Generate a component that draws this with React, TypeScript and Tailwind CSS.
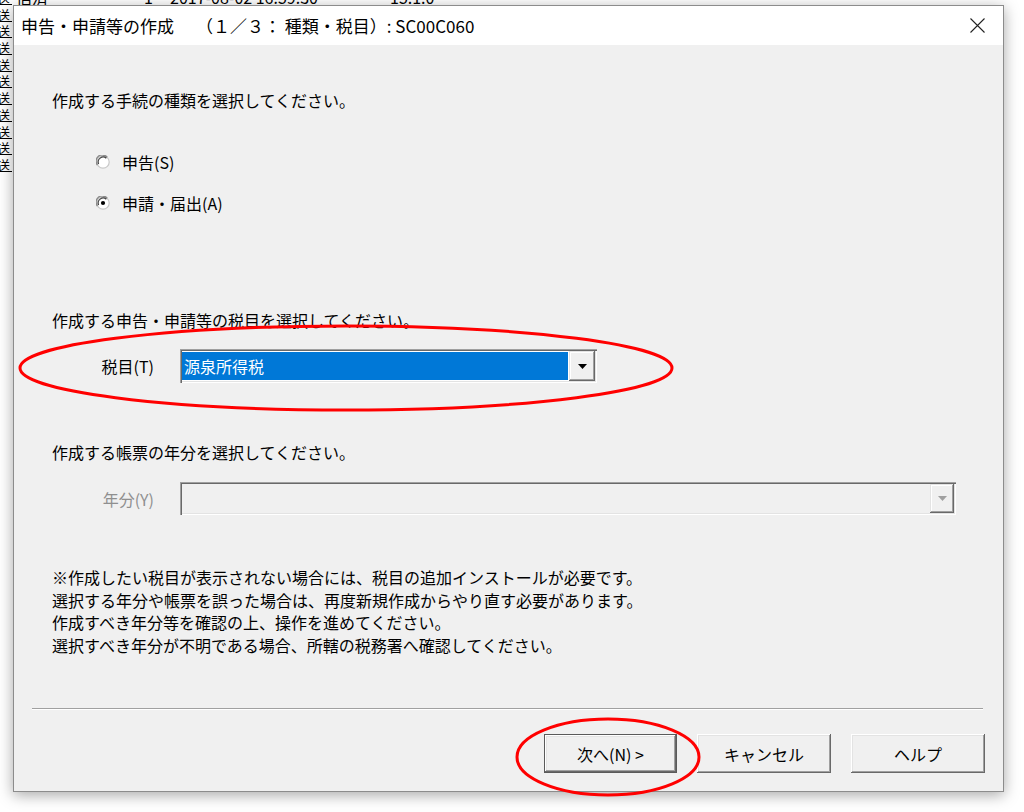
import React from "react";

const bgRows = Array.from({ length: 11 });

function Radio({ checked }: { checked?: boolean }) {
  return (
    <svg width="14" height="14" viewBox="0 0 14 14" className="shrink-0">
      <circle cx="7" cy="7" r="6.2" fill="#ffffff" stroke="#c8c8c8" strokeWidth="1.2" />
      <path d="M1.4 10 A6.2 6.2 0 0 1 11.2 2.3" fill="none" stroke="#8a8a8a" strokeWidth="1.4" />
      <path d="M2.6 9.1 A5 5 0 0 1 10.3 3.2" fill="none" stroke="#404040" strokeWidth="1.2" />
      {checked && <circle cx="7" cy="7" r="2.1" fill="#000" />}
    </svg>
  );
}

function Triangle({ color }: { color: string }) {
  return (
    <svg width="9" height="5" viewBox="0 0 9 5">
      <path d="M0 0 H9 L4.5 5 Z" fill={color} />
    </svg>
  );
}

export default function App() {
  return (
    <div className="relative w-[1024px] h-[812px] bg-white overflow-hidden font-['Noto_Sans_CJK_JP','Noto_Sans',sans-serif] text-black">
      {/* background window list */}
      <div className="flex flex-col mt-[-11.7px]">
        {bgRows.map((_, i) => (
          <div key={i} className="h-[16.7px] overflow-hidden flex items-end text-[13px] leading-[13px] text-black">
            <div className="w-[12px] overflow-hidden border-b border-black h-full flex items-end">
              <span className="ml-[-3px]">送</span>
            </div>
            {i === 0 && (
              <>
                <span className="ml-[4px] w-[128px] text-[16px] leading-[16px]">信済</span>
                <span className="w-[26px] text-[16px] leading-[16px]">1</span>
                <span className="w-[220px] text-[16px] leading-[16px]">2017-08-02 16:59:30</span>
                <span className="text-[16px] leading-[16px]">15.1.0</span>
              </>
            )}
          </div>
        ))}
      </div>

      {/* dialog window */}
      <div className="absolute left-[13px] top-[5px] w-[991px] h-[787px] border border-[#8c8c8c] bg-[#f0f0f0] shadow-[0_3px_14px_rgba(0,0,0,0.35)] flex flex-col">
        <div className="h-[39px] shrink-0 bg-white flex items-center justify-between pl-[7px] pr-[18px]">
          <div className="flex items-center text-[17px] leading-[20px] whitespace-pre">
            <span>申告・申請等の作成</span>
            <span className="ml-[22px]">（１／３： 種類・税目）: SC00C060</span>
          </div>
          <svg width="15" height="15" viewBox="0 0 15 15">
            <path d="M0.5 0.5 L14.5 14.5 M14.5 0.5 L0.5 14.5" stroke="#222" strokeWidth="1.1" />
          </svg>
        </div>

        <div className="flex-1 flex flex-col">
          <div className="pl-[38px] flex flex-col text-[16px] leading-[22px]">
            <div className="mt-[44px]">作成する手続の種類を選択してください。</div>

            <div className="mt-[40px] ml-[44px] flex items-center gap-[12px]">
              <Radio />
              <span>申告(S)</span>
            </div>
            <div className="mt-[19px] ml-[44px] flex items-center gap-[12px]">
              <Radio checked />
              <span>申請・届出(A)</span>
            </div>

            <div className="mt-[95px]">作成する申告・申請等の税目を選択してください。</div>

            <div className="mt-[18px] flex items-center">
              <div className="w-[102px] text-right">税目(T)</div>
              <div className="ml-[26px] w-[417px] h-[34px] flex p-[2px] bg-white shadow-[inset_1px_1px_#a0a0a0,inset_2px_2px_#696969,inset_-1px_-1px_#ffffff,inset_-2px_-2px_#e3e3e3]">
                <div className="flex-1 bg-[#0078d7] text-white flex items-center pl-[2px] mt-[1px] mb-[1px]">源泉所得税</div>
                <div className="w-[26px] ml-[1px] bg-[#f0f0f0] flex items-center justify-center shadow-[inset_-1px_-1px_#696969,inset_1px_1px_#e3e3e3,inset_-2px_-2px_#a0a0a0,inset_2px_2px_#ffffff]">
                  <Triangle color="#000" />
                </div>
              </div>
            </div>

            <div className="mt-[58px]">作成する帳票の年分を選択してください。</div>

            <div className="mt-[19px] flex items-center">
              <div className="w-[102px] text-right text-[#8f8f8f]">年分(Y)</div>
              <div className="ml-[26px] w-[776px] h-[33px] flex p-[2px] bg-[#f0f0f0] shadow-[inset_1px_1px_#a0a0a0,inset_2px_2px_#696969,inset_-1px_-1px_#ffffff,inset_-2px_-2px_#e3e3e3]">
                <div className="flex-1" />
                <div className="w-[24px] bg-[#f0f0f0] flex items-center justify-center shadow-[inset_-1px_-1px_#696969,inset_1px_1px_#e3e3e3,inset_-2px_-2px_#a0a0a0,inset_2px_2px_#ffffff]">
                  <Triangle color="#a0a0a0" />
                </div>
              </div>
            </div>

            <div className="mt-[51px] leading-[22.6px]">
              <div>※作成したい税目が表示されない場合には、税目の追加インストールが必要です。</div>
              <div>選択する年分や帳票を誤った場合は、再度新規作成からやり直す必要があります。</div>
              <div>作成すべき年分等を確認の上、操作を進めてください。</div>
              <div>選択すべき年分が不明である場合、所轄の税務署へ確認してください。</div>
            </div>
          </div>

          <div className="mt-[52px] ml-[18px] mr-[20px] h-[2px] border-t border-[#a0a0a0] border-b border-b-white" />

          <div className="mt-[24px] pr-[18px] flex justify-end gap-[20px] text-[16px]">
            <button className="w-[133px] h-[39px] bg-[#f0f0f0] border border-[#5a5a5a] shadow-[inset_-1px_-1px_#696969,inset_1px_1px_#ffffff,inset_-2px_-2px_#a0a0a0,inset_2px_2px_#e3e3e3] flex items-center justify-center">
              次へ(N) &gt;
            </button>
            <button className="w-[134px] h-[39px] bg-[#f0f0f0] shadow-[inset_-1px_-1px_#696969,inset_1px_1px_#ffffff,inset_-2px_-2px_#a0a0a0,inset_2px_2px_#e3e3e3] flex items-center justify-center">
              キャンセル
            </button>
            <button className="w-[134px] h-[39px] bg-[#f0f0f0] shadow-[inset_-1px_-1px_#696969,inset_1px_1px_#ffffff,inset_-2px_-2px_#a0a0a0,inset_2px_2px_#e3e3e3] flex items-center justify-center">
              ヘルプ
            </button>
          </div>
        </div>
      </div>

      {/* red annotation ellipses */}
      <svg className="absolute inset-0 pointer-events-none" width="1024" height="812" viewBox="0 0 1024 812">
        <ellipse cx="346" cy="368" rx="326" ry="42" fill="none" stroke="#ff0000" strokeWidth="3" />
        <ellipse cx="608" cy="757" rx="91" ry="38" fill="none" stroke="#ff0000" strokeWidth="3" />
      </svg>
    </div>
  );
}
